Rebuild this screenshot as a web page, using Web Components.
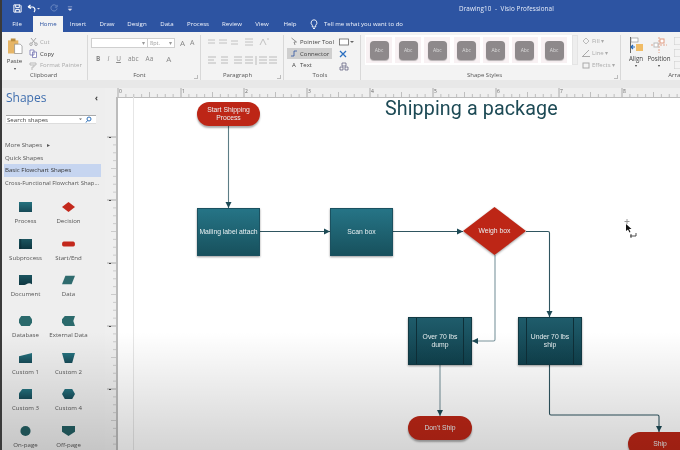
<!DOCTYPE html>
<html><head><meta charset="utf-8"><title>Drawing10 - Visio Professional</title>
<style>html,body{margin:0;padding:0;background:#e9e9e9}body{font-family:"Open Sans","Liberation Sans",sans-serif}</style>
</head><body>
<visio-app>
  <visio-titlebar slot="title"></visio-titlebar>
  <visio-tabs slot="tabs"></visio-tabs>
  <visio-ribbon slot="ribbon"></visio-ribbon>
  <visio-shapes slot="shapes"></visio-shapes>
  <visio-drawing slot="drawing"></visio-drawing>
</visio-app>
<script>
function def(name, html, setup){
  customElements.define(name, class extends HTMLElement{
    constructor(){super();this.attachShadow({mode:'open'});}
    connectedCallback(){
      if(this._d)return;this._d=1;
      this.shadowRoot.innerHTML = typeof html==='function'?html(this):html;
      if(setup)setup(this);
    }
  });
}
const a=(e,n,d)=>e.hasAttribute(n)?e.getAttribute(n):d;

def('visio-app',`<style>
:host{display:block;position:relative;width:680px;height:450px;overflow:hidden;background:#e9e9e9;filter:blur(.3px)}
.wrap{display:flex;flex-direction:column;height:100%}
.gap{height:8px;flex:none;background:#e8e8e8}
.work{display:flex;flex:1;min-height:0}
.fade{position:absolute;left:0;right:0;bottom:0;height:118px;pointer-events:none;background:linear-gradient(rgba(0,0,0,0),rgba(0,0,0,.17))}
.edge{position:absolute;left:0;top:0;bottom:0;width:1.500px;background:#3a3a3a}
</style><div class="wrap"><slot name="title"></slot><slot name="tabs"></slot><slot name="ribbon"></slot><div class="gap"></div>
<div class="work"><slot name="shapes"></slot><slot name="drawing"></slot></div></div><div class="fade"></div><div class="edge"></div>`);

def('visio-titlebar',`<style>
:host{display:flex;height:16px;background:#2d54a2;color:#e8eefa;align-items:center;padding-left:13px;font-size:6.300px;position:relative}
svg{display:block}.q{display:flex;align-items:center;gap:6px}
.t{position:absolute;left:459px;white-space:nowrap;letter-spacing:.1px}
</style><div class="q">
<svg width="9" height="9" viewBox="0 0 10 10"><path d="M1 1h7l1 1v7H1z M3 1v3h4V1 M3 9V6h4v3" fill="none" stroke="#fff" stroke-width="1.100"/></svg>
<svg style="margin-left:-1px" width="14" height="9" viewBox="0 0 14 9"><path d="M1 3l2.500-2M1 3l3 1.500M1 3h5a3 3 0 0 1 1 5" fill="none" stroke="#fff" stroke-width="1.200"/><path d="M10 4h3l-1.500 1.500z" fill="#dde"/></svg>
<svg style="margin-left:3px" width="8" height="8" viewBox="0 0 9 9"><path d="M7.500 2.500A3.500 3.500 0 1 0 8 5M8 1v2.500H5.500" fill="none" stroke="#6f8cc4" stroke-width="1"/></svg>
<svg style="margin-left:3px" width="6" height="7" viewBox="0 0 7 7"><path d="M1 1.500h5M1.500 4h4L3.500 6z" fill="#dde" stroke="#dde" stroke-width=".6"/></svg>
</div><span class="t">Drawing10 &nbsp;-&nbsp; Visio Professional</span>`);

def('visio-tabs',()=>{
 const tabs=[['File',32,0],['Home',30,1],['Insert',30,0],['Draw',28,0],['Design',32,0],['Data',28,0],['Process',34,0],['Review',34,0],['View',26,0],['Help',30,0]];
 return `<style>
:host{display:flex;height:16px;background:#2d54a2;color:#f2f5fc;font-size:6.100px;padding-left:1px;box-sizing:border-box}
.tab{display:flex;align-items:center;justify-content:center;flex:none;padding-bottom:1px}
.on{background:#f3f3f3;color:#2d54a2}
.tell{display:flex;align-items:center;gap:6px;margin-left:5px;white-space:nowrap;font-size:6px}
</style>`+tabs.map(t=>`<div class="tab${t[2]?' on':''}" style="width:${t[1]}px">${t[0]}</div>`).join('')+
`<div class="tell"><svg width="8" height="11" viewBox="0 0 8 11"><path d="M4 .8a3 3 0 0 0-1.700 5.400V8h3.400V6.200A3 3 0 0 0 4 .8zM3 9.500h2" fill="none" stroke="#fff" stroke-width=".9"/></svg><span>Tell me what you want to do</span></div>`;
});

def('rb-group',e=>`<style>
:host{display:flex;flex-direction:column;flex:none;width:${a(e,'w',80)}px;box-sizing:border-box;border-right:1px solid #d8d8d8;height:45px;position:relative;overflow:hidden}
.c{flex:1;min-height:0;display:flex}
.l{height:9px;flex:none;text-align:center;font-size:6px;color:#555;line-height:9px;padding-right:${a(e,'pr',0)}px;box-sizing:border-box;position:relative;white-space:nowrap}
.k{position:absolute;right:2px;bottom:1px;width:4px;height:4px;border:solid #bbb;border-width:0 1px 1px 0;box-sizing:border-box;display:${e.hasAttribute('k')?'block':'none'}}
</style><div class="c"><slot></slot></div><div class="l">${a(e,'label','')}</div><div class="k"></div>`);

def('rb-item',e=>`<style>
:host{display:flex;align-items:center;gap:2px;height:12px;font-size:6px;white-space:nowrap;color:${a(e,'color','#444')};padding-left:${a(e,'pl',3)}px;box-sizing:border-box}
:host([on]){background:#cfcfcf}
</style><slot></slot>`);

def('abc-thumb',`<style>
:host{display:flex;width:26px;height:26px;background:#f8f1f3;align-items:center;justify-content:center;flex:none}
div{width:19px;height:19px;border-radius:4px;background:#8e898b;box-shadow:0 1px 1px #0004;color:#ddd;font-size:5px;display:flex;align-items:center;justify-content:center}
</style><div>Abc</div>`);

def('visio-ribbon',`<style>
:host{display:flex;height:48px;background:#f3f3f3;padding-top:3px;box-sizing:border-box;overflow:hidden;font-size:6.200px;color:#444}
.col{display:flex;flex-direction:column}
svg{display:block;flex:none}
.box{background:#fff;border:1px solid #cfcfcf;height:10px;box-sizing:border-box;font-size:5.500px;color:#999;display:flex;align-items:center;padding-left:2px}
.row{display:flex;align-items:center}
.g{color:#888}
.gal{width:207px;height:30px;background:#fff;margin-left:4px;display:flex;gap:3.200px;align-items:center;padding-left:1px;box-sizing:border-box}
.sb{width:6px;height:30px;background:#eee;border:1px solid #e4e4e4;box-sizing:border-box;flex:none}
</style>
<rb-group w="88" label="Clipboard">
  <div class="col" style="width:29px;align-items:center;font-size:6px">
    <svg style="margin:2px 0 2px 2px" width="15" height="18" viewBox="0 0 16 18"><rect x="0" y="3" width="11" height="14" fill="#e6b566"/><rect x="3" y="1" width="5" height="3" fill="#b98c3e"/><path d="M7 7h6l2 2v8H7z" fill="#fff" stroke="#888" stroke-width=".7"/></svg>
    <span>Paste</span><span style="font-size:4px;margin-top:1px">▾</span>
  </div>
  <div class="col" style="padding-top:1px">
    <rb-item pl="0" color="#aaa"><svg width="9" height="9" viewBox="0 0 9 9"><path d="M2 1l4 5M7 1L3 6" stroke="#aaa" fill="none"/><circle cx="2" cy="7.200" r="1.300" fill="none" stroke="#aaa"/><circle cx="7" cy="7.200" r="1.300" fill="none" stroke="#aaa"/></svg>Cut</rb-item>
    <rb-item pl="0" color="#444"><svg width="9" height="9" viewBox="0 0 9 9"><path d="M1 1h4v5H1zM3.500 3h4v5.500h-4z" fill="#fff" stroke="#66a" stroke-width=".7"/></svg>Copy</rb-item>
    <rb-item pl="0" color="#aaa"><svg width="9" height="9" viewBox="0 0 9 9"><path d="M1 2h6v2H1zM5 4v2H3v3" fill="none" stroke="#bbb" stroke-width="1"/></svg>Format Painter</rb-item>
  </div>
</rb-group>
<rb-group w="113" label="Font" pr="9" k>
  <div class="col" style="padding:2px 0 0 3px;gap:5px">
    <div class="row"><div class="box" style="width:57px;justify-content:flex-end;padding-right:2px">▾</div><div class="box" style="width:27px;border-left:0;justify-content:space-between;padding-right:2px"><span>8pt.</span><span>▾</span></div><span class="g" style="margin-left:5px;font-size:8px">A</span><span class="g" style="margin-left:5px;font-size:7px">A</span></div>
    <div class="row g" style="padding-left:5px;gap:7px;font-size:6.500px"><b>B</b><i>I</i><u>U</u><span>abc</span><span>Aa</span><span style="margin-left:6px;font-size:8px">A</span></div>
  </div>
</rb-group>
<rb-group w="83" label="Paragraph" pr="9" k>
  <div class="col" style="padding:3px 0 0 6px;gap:9px">
    <svg width="66" height="9" viewBox="0 0 66 9" stroke="#c2c2c2" fill="none"><path d="M1 2h7M1 5h7M12 2h8M12 5h8M24 3h7M24 6h7M38 1h8M38 4h8M38 7h8M53 7l3-6 3 6M60 1h2"/></svg>
    <svg width="72" height="9" viewBox="0 0 72 9" stroke="#bbb" fill="none"><path d="M1 1h8M1 4h6M1 7h8M14 1h7M14 4h7M14 7h7M27 1h8M27 4h8M27 7h8M38 1h8M38 4h8M38 7h8M49 0v9M52 1h8M52 4h8M52 7h8M62 1h8M62 4h8M62 7h8"/></svg>
  </div>
</rb-group>
<rb-group w="77" label="Tools" pr="4">
  <div class="col" style="padding-top:1px;margin-left:3px;width:45px">
    <rb-item pl="3"><svg width="8" height="9" viewBox="0 0 7 9"><path d="M1 1l5 4H3.500l1 3" fill="none" stroke="#777" stroke-width=".8"/></svg>Pointer Tool</rb-item>
    <rb-item pl="3" on><svg width="8" height="9" viewBox="0 0 8 9"><path d="M1 7h3V2h3" fill="none" stroke="#2d54a2" stroke-width=".8"/></svg>Connector</rb-item>
    <rb-item pl="3"><span style="width:8px;text-align:center">A</span>Text</rb-item>
  </div>
  <div class="col" style="padding:3px 0 0 7px;gap:4px">
    <svg width="15" height="8" viewBox="0 0 15 8"><rect x=".5" y="1" width="9" height="6" fill="#fff" stroke="#666" stroke-width=".8"/><path d="M11 3h4l-2 2z" fill="#666"/></svg>
    <svg width="8" height="8" viewBox="0 0 8 8"><path d="M1 1l6 6M7 1L1 7" stroke="#2b6fc0" stroke-width="1.300"/></svg>
    <svg width="10" height="9" viewBox="0 0 10 9"><path d="M3 1h4v3H3zM1 5h3v3H1zM6 5h3v3H6z" fill="none" stroke="#557" stroke-width=".7"/></svg>
  </div>
</rb-group>
<rb-group w="260" label="Shape Styles" pr="12" k>
  <div class="row" style="align-items:flex-start">
    <div class="gal"><abc-thumb></abc-thumb><abc-thumb></abc-thumb><abc-thumb></abc-thumb><abc-thumb></abc-thumb><abc-thumb></abc-thumb><abc-thumb></abc-thumb><abc-thumb></abc-thumb></div>
    <div class="sb"></div>
    <div class="col" style="margin-left:2px">
      <rb-item pl="2" color="#aaa"><svg width="8" height="8" viewBox="0 0 8 8"><path d="M1 4l3-3 3 3-3 3z" fill="none" stroke="#bbb"/></svg>Fill ▾</rb-item>
      <rb-item pl="2" color="#aaa"><svg width="8" height="8" viewBox="0 0 8 8"><path d="M1 7L7 1M0 7.500h8" stroke="#aaa"/></svg>Line ▾</rb-item>
      <rb-item pl="2" color="#aaa"><svg width="8" height="8" viewBox="0 0 8 8"><rect x="1" y="2" width="6" height="5" fill="none" stroke="#aaa"/></svg>Effects ▾</rb-item>
    </div>
  </div>
</rb-group>
<rb-group w="118" label="Arrange">
  <div class="col" style="width:30px;align-items:center">
    <svg style="margin-top:2px" width="13" height="16" viewBox="0 0 13 16"><path d="M.5 0v16" stroke="#666"/><rect x="1" y="1" width="7" height="4" fill="#fff" stroke="#888" stroke-width=".6"/><rect x="6" y="7" width="7" height="7" fill="#f0bc66"/><path d="M1 10h4M1 10l2-2M1 10l2 2" stroke="#2468b8" stroke-width="1.200" fill="none"/></svg>
    <span style="margin-top:1px">Align</span><span style="font-size:4px">▾</span>
  </div>
  <div class="col" style="width:16px;align-items:center">
    <svg style="margin-top:2px" width="16" height="16" viewBox="0 0 16 16"><path d="M8 0v16M0 8h16" stroke="#e3a58d" stroke-dasharray="2 1" fill="none"/><rect x="3" y="6" width="4" height="4" fill="#fff" stroke="#bbb"/><rect x="9" y="2" width="4" height="4" fill="#fff" stroke="#e09a80"/></svg>
    <span style="margin-top:1px">Position</span><span style="font-size:4px">▾</span>
  </div>
  <div class="col" style="gap:4px;padding:2px 0 0 7px">
    <svg width="8" height="8" viewBox="0 0 8 8"><rect width="8" height="8" fill="none" stroke="#ccc"/></svg>
    <svg width="8" height="8" viewBox="0 0 8 8"><rect width="8" height="8" fill="none" stroke="#ccc"/></svg>
    <svg width="8" height="8" viewBox="0 0 8 8"><rect width="8" height="8" fill="none" stroke="#ccc"/></svg>
  </div>
</rb-group>`);

def('stencil-item',e=>{
 const k=a(e,'k','rect');const T='url(#t)',D='url(#d)';
 const sh={
  process:`<rect x="3" y="0" width="23" height="12" fill="${T}"/>`,
  decision:`<path d="M14.500 0l11.500 6-11.500 6L3 6z" fill="#c3281c"/>`,
  sub:`<rect x="3" y="0" width="23" height="12" fill="${D}"/><path d="M6 0v12" stroke="#0c2a33"/>`,
  term:`<rect x="3" y="3" width="23" height="6" rx="3" fill="#c3281c"/>`,
  doc:`<path d="M3 0h23v11q-5-2-10 0t-13 1z" fill="${D}"/>`,
  data:`<path d="M9 1h17l-6 10H3z" fill="#2f6b6e"/>`,
  db:`<path d="M7 0h15l4 4v4l-4 4H7L3 8V4z" fill="#2b6a6c"/>`,
  ext:`<path d="M8 0h18l-3 6 3 6H8L3 8V4z" fill="#2b6a6c"/>`,
  c1:`<path d="M3 4l23-4v12H3z" fill="${T}"/>`,
  c2:`<path d="M3 0h23l-5 12H8z" fill="${T}"/>`,
  c3:`<path d="M9 0h17v12H3V5z" fill="${T}"/>`,
  c4:`<path d="M8 0h13l5 6-5 6H8L3 6z" fill="${T}"/>`,
  on:`<ellipse cx="14.500" cy="6" rx="9" ry="6" fill="#245f63"/>`,
  off:`<path d="M3 0h23v7l-11.500 5L3 7z" fill="#245f63"/>`
 }[k];
 return `<style>
:host{display:flex;flex-direction:column;align-items:center;width:43px;font-size:6.100px;color:#555;white-space:nowrap;gap:4px;line-height:9px}
svg{display:block}
</style><svg width="13" height="10" viewBox="3 0 23 12" preserveAspectRatio="none"><defs><linearGradient id="t" x1="0" y1="0" x2="0" y2="1"><stop offset="0" stop-color="#25727f"/><stop offset="1" stop-color="#174a57"/></linearGradient><linearGradient id="d" x1="0" y1="0" x2="0" y2="1"><stop offset="0" stop-color="#1c5560"/><stop offset="1" stop-color="#0e3640"/></linearGradient></defs>${sh}</svg><span>${a(e,'label','')}</span>`;
});

def('visio-shapes',`<style>
:host{display:block;width:105px;flex:none;box-sizing:border-box;padding-left:2px;background:#eeeeee;color:#555;overflow:hidden;font-size:6.100px}
.hd{display:flex;justify-content:space-between;align-items:center;height:21px;padding:0 7px 0 4px;box-sizing:border-box;margin-top:-1px}
.hd b{font-weight:400;font-size:12px;color:#3f6eae}
.hd i{font-style:normal;font-size:9px;color:#444;font-weight:700}
.search{margin:7px 0 0 4px;width:90px;height:9px;background:#fff;border-top:1px solid #aaa;border-bottom:1px solid #ddd;display:flex;justify-content:space-between;align-items:center;color:#444;padding:0 3px 0 1px;box-sizing:border-box}
.m{height:12.500px;line-height:12.500px;padding-left:1px;margin-left:2px;width:97px;box-sizing:border-box;white-space:nowrap;overflow:hidden}
.on{background:#c6d5f0;color:#333}
.list{margin-top:15px}
.grid{display:grid;grid-template-columns:43px 43px;justify-content:start;margin:13px 0 0 2px;grid-template-rows:36.500px 36.500px 41px 36.500px 36.500px 36.500px 36.500px}
</style>
<div class="hd"><b>Shapes</b><i>‹</i></div>
<div class="search"><span>Search shapes</span><svg width="14" height="7" viewBox="0 0 14 7"><path d="M0 2.500h3L1.500 4z" fill="#666"/><circle cx="10" cy="3" r="2" fill="none" stroke="#2d6fb8"/><path d="M8.500 4.500L7 6.500" stroke="#2d6fb8"/></svg></div>
<div class="list">
<div class="m">More Shapes &nbsp; ▸</div><div class="m">Quick Shapes</div><div class="m on">Basic Flowchart Shapes</div><div class="m" style="font-size:5.900px">Cross-Functional Flowchart Shap...</div>
</div>
<div class="grid">
<stencil-item k="process" label="Process"></stencil-item><stencil-item k="decision" label="Decision"></stencil-item>
<stencil-item k="sub" label="Subprocess"></stencil-item><stencil-item k="term" label="Start/End"></stencil-item>
<stencil-item k="doc" label="Document"></stencil-item><stencil-item k="data" label="Data"></stencil-item>
<stencil-item k="db" label="Database"></stencil-item><stencil-item k="ext" label="External Data"></stencil-item>
<stencil-item k="c1" label="Custom 1"></stencil-item><stencil-item k="c2" label="Custom 2"></stencil-item>
<stencil-item k="c3" label="Custom 3"></stencil-item><stencil-item k="c4" label="Custom 4"></stencil-item>
<stencil-item k="on" label="On-page"></stencil-item><stencil-item k="off" label="Off-page"></stencil-item>
</div>`);

def('visio-ruler',e=>{
 const v=e.hasAttribute('v');let s='',n='';
 const off=+a(e,'off',0);
 for(let i=0;i<9;i++){
  const p=off+i*63;
  if(v)s+=`<path d="M1 ${p}H10" stroke="#999" stroke-width=".8"/><path d="M3 ${p+.5}h2" stroke="#444" stroke-width="1.200"/>`;
  else s+=`<path d="M${p} 0V9" stroke="#999" stroke-width=".8"/>`;
  for(let j=1;j<8;j++){const q=p+j*63/8;const L=j==4?5:3;
   s+=v?`<path d="M${10-L} ${q}H10" stroke="#bbb" stroke-width=".7"/>`:`<path d="M${q} ${9-L}V9" stroke="#aaa" stroke-width=".7"/>`;}
  if(!v)n+=`<text x="${p+1}" y="5" font-size="5" fill="#666" font-family="Open Sans">${i}</text>`;
 }
 return `<style>:host{display:block;background:#efefef}svg{display:block}</style><svg width="${v?10:574}" height="${v?353:9}">${s}${n}</svg>`;
});

def('flow-node',e=>{
 const k=a(e,'k','proc');
 const base={
  proc:'background:linear-gradient(#267587,#17505c);box-shadow:0 1px 2px #0006;outline:1px solid #1b5160;outline-offset:-1px',
  sub:'background:linear-gradient(#1f5c6b,#10404c);box-shadow:0 1px 2px #0006;border:1px solid #123a44;box-sizing:border-box',
  term:'background:#bd2616;border-radius:13px;box-shadow:0 2px 2px #0005',
  dec:''
 }[k];
 return `<style>
:host{position:absolute;left:${a(e,'x')}px;top:${a(e,'y')}px;width:${a(e,'w',63)}px;height:${a(e,'h',48)}px;${base};display:flex;align-items:center;justify-content:center;text-align:center;color:#e9f0f2;font-size:6.800px;line-height:8.500px;font-family:"Liberation Sans",Arial,sans-serif}
span{position:relative;padding:0 2px;white-space:nowrap}
.bar{position:absolute;top:0;bottom:0;width:0;border-left:1px solid #0e2f38}
svg{position:absolute;inset:0;filter:drop-shadow(0 1px 1px #0006)}
</style>${k==='dec'?`<svg width="63" height="48" viewBox="0 0 63 48"><path d="M31.500 0L63 24 31.500 48 0 24z" fill="#bd2616"/></svg>`:''}${k==='sub'?'<div class="bar" style="left:7px"></div><div class="bar" style="right:7px"></div>':''}<span><slot></slot></span>`;
});

def('visio-drawing',`<style>
:host{display:block;flex:1;min-width:0;position:relative;background:#fff;overflow:hidden}
.vr{position:absolute;left:0;top:9px;bottom:0;width:13px;box-sizing:border-box;background:#efefef;border-right:2px solid #bcbcbc;padding-left:1px}
.left{position:absolute;left:13px;top:9px;bottom:0;width:16px;border-right:1px solid #e6e6e6;box-sizing:border-box}
.hr{border-bottom:1px solid #bcbcbc}
.layer{position:absolute;left:-105px;top:-88px;width:680px;height:450px}
h1{position:absolute;left:385px;top:97px;margin:0;font:400 19.700px "Roboto","Liberation Sans",sans-serif;letter-spacing:.1px;color:#1d4a55;white-space:nowrap}
svg.c{position:absolute;left:0;top:0}
</style>
<visio-ruler class="hr" off="13"></visio-ruler>
<div class="vr"><visio-ruler v off="40"></visio-ruler></div>
<div class="left"></div>
<div style="position:absolute;left:0;top:0;width:0;height:0"><div class="layer">
<h1>Shipping a package</h1>
<svg class="c" width="680" height="450" fill="none" stroke="#2f5560" stroke-width="1.100">
<defs><marker id="ar" markerUnits="userSpaceOnUse" markerWidth="7" markerHeight="7" refX="6" refY="3.500" orient="auto"><path d="M0 .5L6 3.500 0 6.500z" fill="#1d4a55" stroke="none"/></marker></defs>
<path d="M228.500 126V208" stroke="#5d7d86" marker-end="url(#ar)"/>
<path d="M260 231.500H330" marker-end="url(#ar)"/>
<path d="M393 231.500H463" marker-end="url(#ar)"/>
<path d="M526 231.500H548q1.500 0 1.500 1.500V317" marker-end="url(#ar)"/>
<path d="M495 255V339.500q0 1.500-1.500 1.500H472" stroke="#7c969e" marker-end="url(#ar)"/>
<path d="M440 365V416" stroke="#7c969e" marker-end="url(#ar)"/>
<path d="M549.500 365V413.500q0 1.500 1.500 1.500H657.500q1.500 0 1.500 1.500V432" marker-end="url(#ar)"/>
</svg>
<flow-node k="term" x="197" y="102" h="24">Start Shipping<br>Process</flow-node>
<flow-node k="proc" x="197" y="208">Mailing label attach</flow-node>
<flow-node k="proc" x="330" y="208">Scan box</flow-node>
<flow-node k="dec" x="463" y="207">Weigh box</flow-node>
<flow-node k="sub" x="408" y="317" w="64">Over 70 lbs<br>dump</flow-node>
<flow-node k="sub" x="518" y="317" w="64">Under 70 lbs<br>ship</flow-node>
<flow-node k="term" x="408" y="416" w="64" h="24">Don't Ship</flow-node>
<flow-node k="term" x="628" y="432" w="64" h="24">Ship</flow-node>
<svg class="c" style="left:620px;top:218px" width="20" height="22" viewBox="0 0 20 22" fill="none"><path d="M7 1v5M4.500 3.500h5" stroke="#999"/><path d="M6 6v7l2-1.500 1.500 3 1-.5-1.500-3h2.500z" fill="#111"/><path d="M11 18h5v-3M11 18l-1 0M11 16v4" stroke="#222" stroke-width=".8"/></svg>
</div></div>`);
</script>
</body></html>
